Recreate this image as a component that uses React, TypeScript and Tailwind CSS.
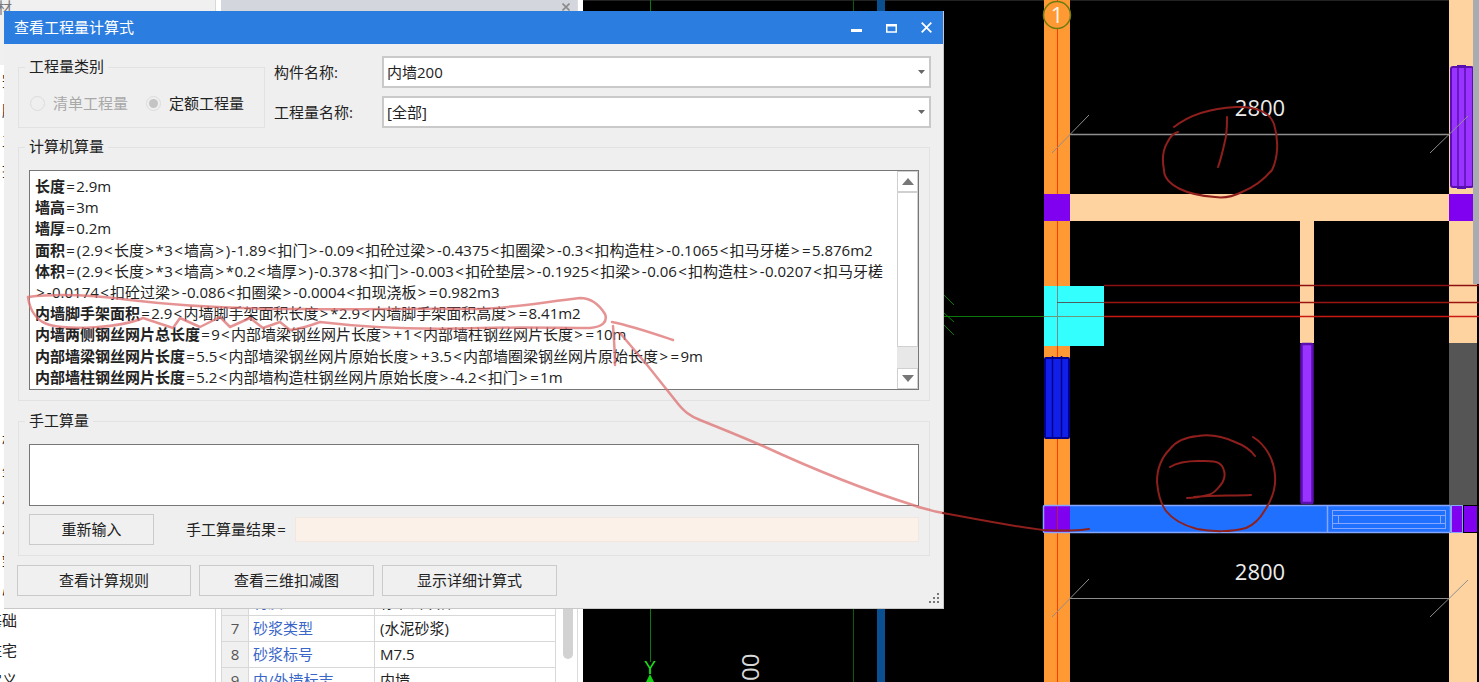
import React from "react";

const FORMULA_LINES = [
  { name: "长度", rest: "=2.9m" },
  { name: "墙高", rest: "=3m" },
  { name: "墙厚", rest: "=0.2m" },
  {
    name: "面积",
    rest: "=(2.9<长度>*3<墙高>)-1.89<扣门>-0.09<扣砼过梁>-0.4375<扣圈梁>-0.3<扣构造柱>-0.1065<扣马牙槎>=5.876m2",
  },
  {
    name: "体积",
    rest: "=(2.9<长度>*3<墙高>*0.2<墙厚>)-0.378<扣门>-0.003<扣砼垫层>-0.1925<扣梁>-0.06<扣构造柱>-0.0207<扣马牙槎",
  },
  { name: "", rest: ">-0.0174<扣砼过梁>-0.086<扣圈梁>-0.0004<扣现浇板>=0.982m3" },
  { name: "内墙脚手架面积", rest: "=2.9<内墙脚手架面积长度>*2.9<内墙脚手架面积高度>=8.41m2" },
  { name: "内墙两侧钢丝网片总长度", rest: "=9<内部墙梁钢丝网片长度>+1<内部墙柱钢丝网片长度>=10m" },
  { name: "内部墙梁钢丝网片长度", rest: "=5.5<内部墙梁钢丝网片原始长度>+3.5<内部墙圈梁钢丝网片原始长度>=9m" },
  { name: "内部墙柱钢丝网片长度", rest: "=5.2<内部墙构造柱钢丝网片原始长度>-4.2<扣门>=1m" },
];

const PROP_ROWS = [
  { no: "6", name: "材质", value: "标准砖块体" },
  { no: "7", name: "砂浆类型", value: "(水泥砂浆)" },
  { no: "8", name: "砂浆标号", value: "M7.5" },
  { no: "9", name: "内/外墙标志", value: "内墙" },
];

// the tree on the left is almost all hidden, only the cut-off ends of the rows show
const TREE_ROWS = ["完", "脚", "主", "措", "", "", "", "", "", "", "", "", "柱", "坐", "板", "梯", "塑", "心", "基础", "住宅", "自定义"];

// the original font sets these symbols wider than ours does
function Spaced({ text }: { text: string }) {
  const parts = text.split(/([<>=+]|[-*()])/);
  return (
    <>
      {parts.map((part, i) => {
        if (/^[<>=+]$/.test(part)) return <span key={i} className="mx-[1.3px]">{part}</span>;
        if (/^[-*()]$/.test(part)) return <span key={i} className="mx-[0.5px]">{part}</span>;
        return part;
      })}
    </>
  );
}

function CadDrawing() {
  return (
    <svg width="896" height="682" viewBox="583 0 896 682" className="block">
      <rect x="583" y="0" width="896" height="1" fill="#222" />

      {/* axis lines */}
      <line x1="650.5" y1="0" x2="650.5" y2="662" stroke="#0a7a0a" />
      <line x1="853.5" y1="0" x2="853.5" y2="682" stroke="#0a5c0a" />
      <rect x="877" y="0" width="8" height="682" fill="#0a4f90" />
      <text x="650" y="674" textAnchor="middle" fontSize="18" fill="#22e022" fontFamily="Liberation Sans">Y</text>
      <path d="M650 674 L646 682 H654 Z" fill="#12d012" />
      <text transform="translate(759 681) rotate(-90)" fontSize="24" fill="#d8d8d8" fontFamily="Open Sans">00</text>

      {/* left column */}
      <rect x="1044" y="0" width="26" height="682" fill="#ff9933" />
      <line x1="1057.5" y1="0" x2="1057.5" y2="682" stroke="#ff3d00" />
      <circle cx="1057" cy="15" r="13.5" fill="#ff9933" stroke="#6f7a10" strokeWidth="1.5" />
      <text x="1057" y="23" textAnchor="middle" fontSize="22" fill="#fff4e4" fontFamily="Open Sans">1</text>

      {/* right column */}
      <rect x="1449" y="0" width="28" height="350" fill="#ffd3a0" />
      <rect x="1449" y="343" width="28" height="162" fill="#555555" />
      <rect x="1449" y="533" width="28" height="149" fill="#ffd3a0" />

      {/* beams */}
      <rect x="1070" y="194" width="379" height="27" fill="#ffd3a0" />
      <rect x="1044" y="194" width="26" height="27" fill="#8000f0" />
      <rect x="1449" y="194" width="24" height="27" fill="#8000f0" />
      <rect x="1300" y="221" width="14" height="122" fill="#ffd3a0" />

      {/* window, top right */}
      <rect x="1451" y="67" width="22" height="120" rx="2" fill="#9a33ff" stroke="#5a10b0" strokeWidth="2" />
      <path d="M1458 66V187M1465 66V187" stroke="#5a10b0" strokeWidth="1.5" />
      <rect x="1457" y="65" width="9" height="2" fill="#5a10b0" />
      <rect x="1457" y="187" width="9" height="2" fill="#5a10b0" />

      {/* window, inner wall */}
      <rect x="1301.5" y="344" width="11" height="159" rx="1" fill="#9a33ff" stroke="#5a10b0" strokeWidth="2.5" />

      {/* door, left column */}
      <rect x="1045" y="358" width="24" height="80" rx="1" fill="#1020e8" stroke="#00008c" strokeWidth="2" />
      <path d="M1052.5 356V439M1061.5 356V439" stroke="#00008c" strokeWidth="1.5" />

      {/* cyan column and the red lines through it */}
      <rect x="1044" y="286" width="60" height="60" fill="#33ffff" />
      <line x1="1057.5" y1="286" x2="1057.5" y2="346" stroke="#7a8a8a" />
      <line x1="944" y1="316.5" x2="1044" y2="316.5" stroke="#0a7a0a" />
      <path d="M944 295L954 305M944 313L954 322M944 325L954 335" stroke="#0a7a0a" />
      <line x1="1044" y1="316.5" x2="1104" y2="316.5" stroke="#6a9a7a" />
      <line x1="1057" y1="302.5" x2="1104" y2="302.5" stroke="#50605f" />
      <line x1="1104" y1="285.5" x2="1479" y2="285.5" stroke="#8b1010" strokeWidth="1.5" />
      <line x1="1104" y1="302.5" x2="1479" y2="302.5" stroke="#9a1510" strokeWidth="1.5" />
      <line x1="1104" y1="316.5" x2="1479" y2="316.5" stroke="#c81a10" strokeWidth="1.5" />

      {/* selected beam */}
      <rect x="1044" y="505" width="406" height="28" fill="#2070ff" />
      <rect x="1044" y="506" width="26" height="26" fill="#8000f0" />
      <line x1="1057.5" y1="506" x2="1057.5" y2="532" stroke="#b81a50" />
      <rect x="1043.5" y="505.5" width="407" height="27" rx="1" fill="none" stroke="#86a6ff" strokeWidth="1.5" />
      <line x1="1327.5" y1="505" x2="1327.5" y2="533" stroke="#86a6ff" strokeWidth="1.5" />
      <path d="M1332 510.5H1446M1332 515.5H1446M1332 523.5H1446M1332 528.5H1446" stroke="#86a6ff" />
      <path d="M1332.5 510V529M1445.5 510V529M1338.5 515V524M1440.5 515V524" stroke="#86a6ff" />
      <rect x="1451.5" y="505.5" width="11" height="27" fill="#8000f0" stroke="#86a6ff" />
      <rect x="1464" y="506" width="13" height="26" fill="#8000f0" />

      {/* dimensions */}
      <g stroke="#8e8e8e">
        <line x1="1070" y1="134.5" x2="1449" y2="134.5" strokeWidth="1.5" />
        <line x1="1052" y1="153" x2="1089" y2="115" />
        <line x1="1430" y1="153" x2="1468" y2="116" />
        <line x1="1070" y1="598.5" x2="1449" y2="598.5" />
        <line x1="1052" y1="617" x2="1089" y2="579" />
        <line x1="1430" y1="617" x2="1468" y2="580" />
      </g>
      <text x="1260" y="116" textAnchor="middle" fontSize="22" fill="#ececec" fontFamily="Open Sans">2800</text>
      <text x="1260" y="580" textAnchor="middle" fontSize="22" fill="#ececec" fontFamily="Open Sans">2800</text>
    </svg>
  );
}

function Annotations() {
  return (
    <svg width="1479" height="682" viewBox="0 0 1479 682" fill="none" strokeLinecap="round" strokeLinejoin="round" className="absolute left-0 top-0 pointer-events-none">
      {/* circled 1 */}
      <g stroke="#8e1f1c" strokeWidth="2">
        <path d="M1174 127C1192 113 1215 108 1236 107C1255 106 1270 112 1274 124C1279 140 1278 158 1272 170C1263 181 1252 188 1242 192C1232 197 1222 198 1215 197C1203 196 1190 194 1180 189C1170 184 1164 178 1164 170C1162 160 1163 150 1167 143C1170 137 1173 133 1178 132" />
        <path d="M1227 117C1227 126 1227 134 1225 141C1223 150 1221 159 1218 167" />
      </g>
      {/* circled 2 */}
      <g stroke="#8e1f1c" strokeWidth="2">
        <path d="M1255 456C1250 449 1243 445 1235 442C1222 436 1210 434 1198 436C1186 437 1176 441 1170 449C1161 458 1157 470 1157 482C1158 493 1160 503 1166 511C1173 520 1186 526 1197 529C1212 532 1232 532 1246 528C1256 524 1261 517 1265 510C1273 498 1276 486 1275 475C1274 460 1266 445 1253 437" />
        <path d="M1170 467C1178 462 1188 461 1198 461C1208 461 1218 460 1222 466C1227 474 1224 482 1219 487C1215 492 1212 494 1208 495C1200 497 1192 498 1187 498M1194 497C1212 495 1232 496 1251 495" />
      </g>
      {/* ring round the scaffold line */}
      <path
        d="M143 318C120 328 70 330 50 325C38 322 30 312 28 297C60 293 100 296 130 300C180 306 230 309 300 309C360 310 420 308 480 309C510 308 545 302 580 298C592 298 600 306 605 314C608 322 602 327 590 328C560 328 520 327 480 328C420 330 370 328 320 322C312 325 300 329 290 330L280 322L263 328L250 318L230 327L220 317L200 327L180 318L173 328L143 318"
        stroke="#dd6f70"
        strokeOpacity="0.75"
        strokeWidth="2.5"
      />
      {/* arrow out to the beam */}
      <path d="M612 322C632 326 652 333 673 340M613 326C614 340 615 352 615 365" stroke="#dd6f70" strokeOpacity="0.75" strokeWidth="2.5" />
      <path d="M620 333C640 356 658 378 675 400C684 412 690 416 700 420C720 428 742 437 763 446C815 470 865 490 913 505C923 509 933 511 943 513" stroke="#dd6f70" strokeOpacity="0.75" strokeWidth="2.5" />
      <path d="M943 513C975 519 1010 526 1043 530C1060 531 1075 531 1089 529" stroke="#8e1f1c" strokeWidth="2" />
    </svg>
  );
}

function Combo({ label, value }: { label: string; value: string }) {
  return (
    <div className="flex items-center">
      <span className="w-[108px] shrink-0 text-[#222]">{label}</span>
      <div className="flex h-[32px] w-[549px] items-center justify-between border-2 border-[#c9c9c9] bg-white pl-[3px] pr-[4px]">
        <span className="text-[#222]">{value}</span>
        <svg width="7" height="4" viewBox="0 0 7 4"><path d="M0 0H7L3.5 4Z" fill="#666" /></svg>
      </div>
    </div>
  );
}

function Radio({ checked, label, muted }: { checked?: boolean; label: string; muted?: boolean }) {
  return (
    <div className="flex items-center gap-[8px]">
      <span className="flex h-[15px] w-[15px] items-center justify-center rounded-full border border-[#dcdcdc]">
        {checked && <span className="h-[9px] w-[9px] rounded-full bg-[#c4c4c4]" />}
      </span>
      <span className={muted ? "text-[#a8a8a8]" : "text-[#222]"}>{label}</span>
    </div>
  );
}

function ScrollArrow({ up }: { up?: boolean }) {
  return (
    <div className="flex h-[21px] items-center justify-center border border-[#d0d0d0] bg-white">
      <svg width="12" height="7" viewBox="0 0 12 7">
        <path d={up ? "M6 0L12 7H0Z" : "M0 0H12L6 7Z"} fill="#777" />
      </svg>
    </div>
  );
}

function DlgButton({ children, width }: { children: React.ReactNode; width: string }) {
  return (
    <button className={`flex h-[31px] ${width} items-center justify-center border border-[#cacaca] bg-[#f0f0f0] text-[#222]`}>
      {children}
    </button>
  );
}

function Dialog() {
  return (
    <div className="absolute left-[4px] top-[11px] flex h-[598px] w-[940px] flex-col border-b border-r border-[#c8c8c8] bg-[#efefef] text-[15px] leading-[21px]">
      <div className="flex h-[33px] shrink-0 items-center justify-between bg-[#2b7de0] pl-[10px] pr-[11px]">
        <span className="text-white">查看工程量计算式</span>
        <div className="flex items-center gap-[24px]">
          <svg width="11" height="11" viewBox="0 0 11 11"><rect x="0" y="7" width="11" height="3" fill="#fff" /></svg>
          <svg width="11" height="11" viewBox="0 0 11 11"><path d="M.75 3h9.5v7H.75z" fill="none" stroke="#fff" strokeWidth="1.5" /><rect x="0" y="2" width="11" height="2.5" fill="#fff" /></svg>
          <svg width="11" height="11" viewBox="0 0 11 11"><path d="M.7.7l9.6 9.6M10.3.7L.7 10.3" fill="none" stroke="#fff" strokeWidth="1.8" /></svg>
        </div>
      </div>

      <div className="flex pl-[14px] pt-[12px]">
        <fieldset className="mt-px h-[71px] w-[247px] border border-[#e2e2e2]">
          <legend className="ml-[6px] px-[4px] pb-[2px] leading-[19px] text-[#222]">工程量类别</legend>
          <div className="flex gap-[18px] pl-[11px] pt-[15px]">
            <Radio label="清单工程量" muted />
            <Radio label="定额工程量" checked />
          </div>
        </fieldset>
        <div className="ml-[9px] flex flex-col gap-[8px]">
          <Combo label="构件名称:" value="内墙200" />
          <Combo label="工程量名称:" value="[全部]" />
        </div>
      </div>

      <fieldset className="ml-[14px] mt-[9px] h-[264px] w-[912px] border border-[#e2e2e2] px-[10px]">
        <legend className="ml-[-4px] px-[4px] pb-[2px] leading-[19px] text-[#222]">计算机算量</legend>
        <div className="mt-[12px] flex h-[220px] w-[890px] border border-[#777] bg-white">
          <div className="min-w-0 flex-1 overflow-hidden whitespace-nowrap pl-[5px] pt-[5px] text-[#222]">
            {FORMULA_LINES.map((line, i) => (
              <div key={i} className="h-[21.2px] leading-[21.2px]">
                {line.name && <b className="font-bold">{line.name}</b>}
                <Spaced text={line.rest} />
              </div>
            ))}
          </div>
          <div className="flex w-[21px] shrink-0 flex-col bg-[#e8e8e8]">
            <ScrollArrow up />
            <div className="h-[155px] border border-[#d0d0d0] bg-white" />
            <div className="flex-1" />
            <ScrollArrow />
          </div>
        </div>
      </fieldset>

      <fieldset className="ml-[14px] mt-[10px] h-[145px] w-[912px] border border-[#e2e2e2] px-[10px]">
        <legend className="ml-[-4px] px-[4px] pb-[2px] leading-[19px] text-[#222]">手工算量</legend>
        <div className="mt-[12px] h-[62px] w-[890px] border border-[#777] bg-white" />
        <div className="mt-[8px] flex items-center">
          <DlgButton width="w-[125px]">重新输入</DlgButton>
          <span className="ml-[32px] w-[109px] shrink-0 text-[#222]">手工算量结果<Spaced text="=" /></span>
          <div className="h-[25px] w-[624px] border border-[#f0e8e0] bg-[#fbf1e9]" />
        </div>
      </fieldset>

      <div className="ml-[13px] mt-[9px] flex gap-[8px]">
        <DlgButton width="w-[174px]">查看计算规则</DlgButton>
        <DlgButton width="w-[175px]">查看三维扣减图</DlgButton>
        <DlgButton width="w-[175px]">显示详细计算式</DlgButton>
      </div>

      <svg width="12" height="12" viewBox="0 0 12 12" className="absolute bottom-[3px] right-[3px]">
        <path d="M9 0h2v2H9zM5 4h2v2H5zM9 4h2v2H9zM1 8h2v2H1zM5 8h2v2H5zM9 8h2v2H9z" fill="#777" />
      </svg>
    </div>
  );
}

export default function App() {
  return (
    <div className="relative flex h-[682px] w-[1479px] overflow-hidden bg-black font-['Open_Sans','Noto_Sans_CJK_SC',sans-serif]">
      {/* project tree */}
      <div className="h-full w-[216px] shrink-0 overflow-hidden border-r border-[#d8d8d8] bg-white text-[15px] text-[#222]">
        <div className="h-[65px] overflow-hidden bg-[#f0f0f0]">
          <span className="ml-[-3px] block leading-[14px] text-[#777]">材</span>
        </div>
        {TREE_ROWS.map((row, i) => (
          <div key={i} className="flex h-[30px] items-center justify-end overflow-hidden pr-[198px] leading-[30px] whitespace-nowrap">
            {row}
          </div>
        ))}
      </div>

      {/* properties */}
      <div className="flex h-full w-[367px] shrink-0 flex-col bg-white text-[15px]">
        <div className="ml-[5px] flex h-[11px] w-[356px] shrink-0 items-center justify-end overflow-hidden bg-[#d4d6de] pr-[7px] pt-[2px]">
          <svg width="8" height="8" viewBox="0 0 8 8"><path d="M.5.5l7 7M7.5.5l-7 7" stroke="#8a8a8a" strokeWidth="1.6" /></svg>
        </div>
        <div className="relative ml-[5px] mt-[579px] w-[335px] border-l border-r border-[#d8d8d8]">
          {PROP_ROWS.map((row) => (
            <div key={row.no} className="flex h-[26px] border-b border-[#d8d8d8]">
              <span className="flex w-[27px] shrink-0 items-center justify-center border-r border-[#d8d8d8] bg-[#f0f0f0] text-[#555]">{row.no}</span>
              <span className="flex w-[126px] shrink-0 items-center border-r border-[#d8d8d8] pl-[4px] text-[#3a66c8]">{row.name}</span>
              <span className="flex items-center pl-[5px] text-[#222]">{row.value}</span>
            </div>
          ))}
        </div>
        <div className="absolute left-[563px] top-[600px] h-[59px] w-[10px] rounded-b-[5px] bg-[#d2d2d2]" />
        <div className="absolute left-[577px] top-[0px] h-[682px] w-px bg-[#dcdcdc]" />
      </div>

      {/* drawing canvas */}
      <div className="relative h-full min-w-0 flex-1 overflow-hidden bg-black">
        <CadDrawing />
        <div className="absolute right-0 top-0 h-[284px] w-[6px] bg-[#a8acb0]" />
      </div>

      <Dialog />
      <Annotations />
    </div>
  );
}
